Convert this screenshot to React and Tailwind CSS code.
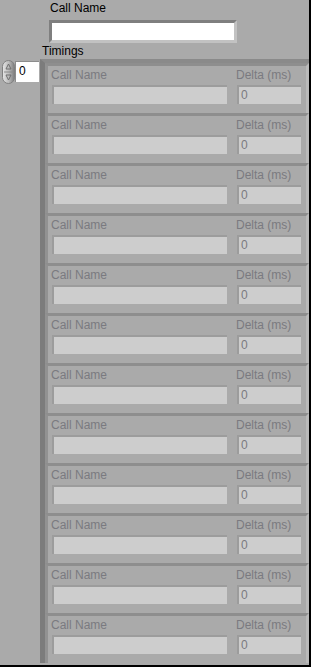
import React from "react";

const Cluster = () => (
  <div className="h-[50px] border-t-[3px] border-l-[3px] border-r-[3px] border-t-[#8e8e8e] border-l-[#929292] border-r-[#bababa] flex pl-[3px]">
    {/* call name */}
    <div className="w-[185px] flex flex-col">
      <div className="h-[16px] mt-[1px] leading-[16px] text-[#7a7a80]">Call Name</div>
      <div className="ml-[1px] mt-[2px] w-[175px] h-[19px] bg-[#cdcdcd] border-t-2 border-l-2 border-[#9c9c9c]"></div>
    </div>
    {/* delta */}
    <div className="flex flex-col">
      <div className="h-[16px] mt-[1px] leading-[16px] text-[#7a7a80]">Delta (ms)</div>
      <div className="ml-[1px] mt-[2px] w-[64px] h-[19px] bg-[#cdcdcd] border-t-2 border-l-2 border-[#9c9c9c] pl-[2px] leading-[17px] text-[#7a7a80]">
        0
      </div>
    </div>
  </div>
);

const Spinner = () => (
  <svg width="13" height="24" viewBox="0 0 13 24">
    <defs>
      <linearGradient id="sp" x1="0" y1="0" x2="1" y2="0">
        <stop offset="0" stopColor="#e6e6e6" />
        <stop offset="0.5" stopColor="#bdbdbd" />
        <stop offset="1" stopColor="#7d7d7d" />
      </linearGradient>
    </defs>
    <rect x="0.5" y="0.5" width="12" height="23" rx="6" fill="url(#sp)" stroke="#808080" />
    <line x1="2" y1="12" x2="11" y2="12" stroke="#8a8a8a" />
    <path d="M6.5 4 L9 9 L4 9 Z" fill="none" stroke="#6e6e6e" />
    <path d="M6.5 20 L9 15 L4 15 Z" fill="none" stroke="#6e6e6e" />
  </svg>
);

export default function App() {
  const rows = Array.from({ length: 12 });
  return (
    <div className="w-[311px] h-[667px] bg-[#aaaaaa] border-r-2 border-b-2 border-black text-[12px] text-black font-['Liberation_Sans',Arial,sans-serif] overflow-hidden">
      {/* top label and control */}
      <div className="pl-[50px] h-[16px] leading-[16px]">Call Name</div>
      <div className="ml-[49px] mt-[4px] w-[188px] h-[23px] bg-white border-t-[3px] border-l-[3px] border-r-[3px] border-b-[3px] border-t-[#7f7f7f] border-l-[#7f7f7f] border-r-[#c2c2c2] border-b-[#c2c2c2]"></div>
      <div className="pl-[42px] h-[16px] leading-[16px]">Timings</div>

      <div className="flex">
        {/* index display */}
        <div className="w-[40px] flex items-start pl-[2px] pt-[1px]">
          <Spinner />
          <div className="mt-[1px] w-[24px] h-[21px] bg-white border-t border-l border-[#8c8c8c] pl-[3px] leading-[19px]">0</div>
        </div>

        {/* array */}
        <div className="flex-1 border-t-4 border-l-[5px] border-t-[#8a8a8a] border-l-[#7c7c7c]">
          {rows.map((_, i) => (
            <Cluster key={i} />
          ))}
        </div>
      </div>
    </div>
  );
}
